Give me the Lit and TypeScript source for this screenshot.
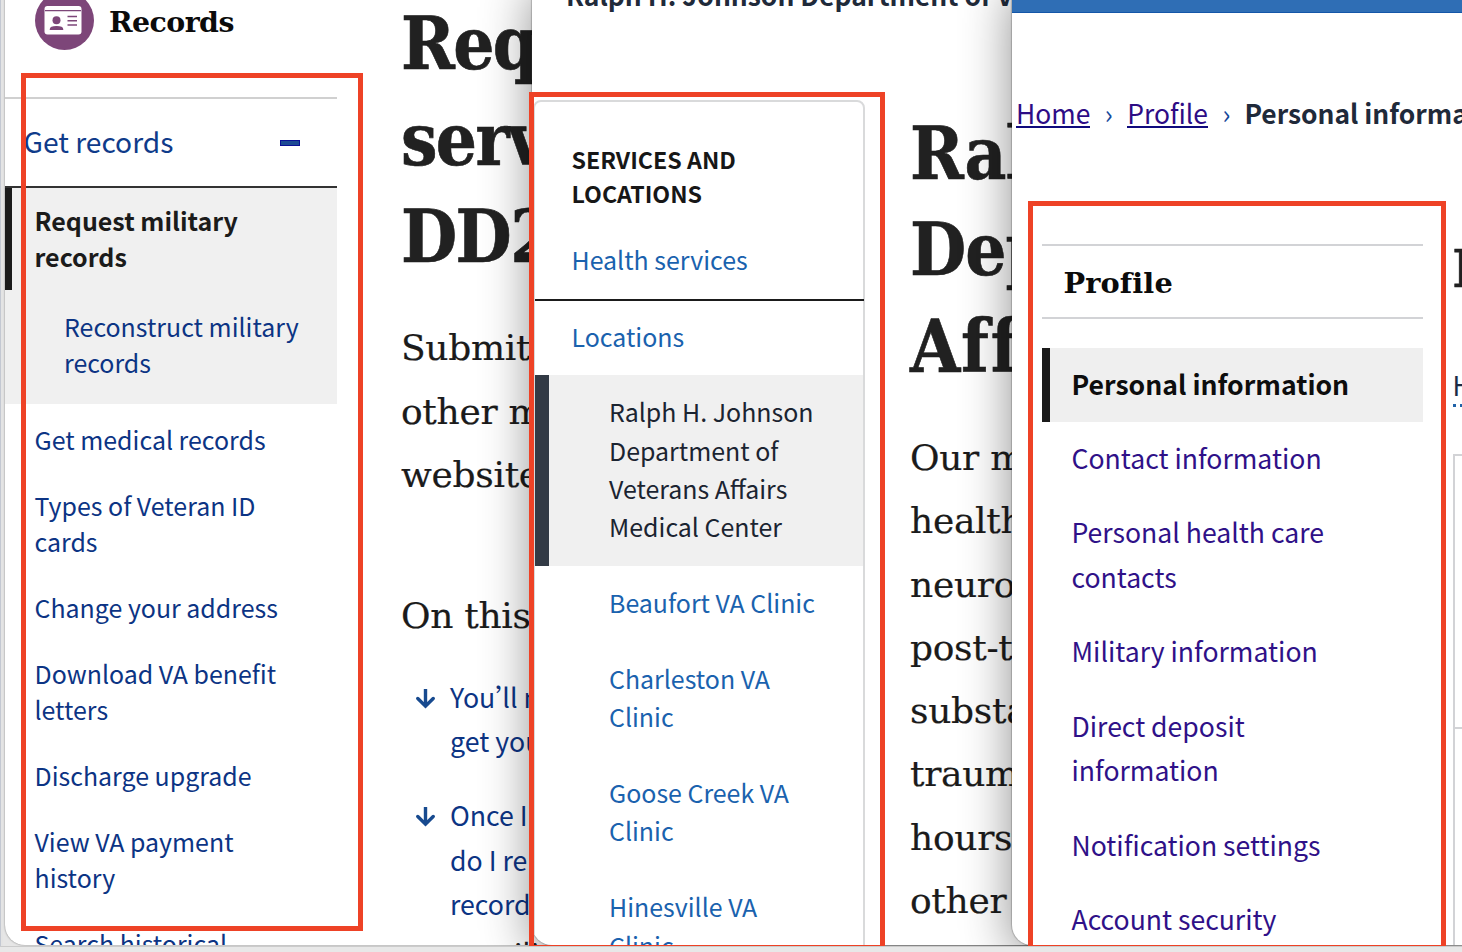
import { LitElement, html, css } from "lit";
import { customElement } from "lit/decorators.js";

const recordLinks = [
  "Get medical records", "Types of Veteran ID cards", "Change your address", "Download VA benefit letters",
  "Discharge upgrade", "View VA payment history", "Search historical military",
];
const clinics = ["Beaufort VA Clinic", "Charleston VA Clinic", "Goose Creek VA Clinic", "Hinesville VA Clinic"];
const profileLinks = [
  "Contact information", "Personal health care contacts", "Military information",
  "Direct deposit information", "Notification settings", "Account security",
];

const arrow = html`<svg class="arrow" viewBox="0 0 20 20" width="20" height="20">
  <path d="M9.5 .5V16M1.8 9.5L9.5 17.2L17.2 9.5" fill="none" stroke="#174a8f" stroke-width="3.4" stroke-linecap="round" />
</svg>`;

@customElement("app-root")
export class AppRoot extends LitElement {
  static styles = css`
    :host {
      display: block; position: relative; width: 1462px; height: 952px; overflow: hidden;
      background: linear-gradient(90deg, #c3c8d2 0 1px, #e4e4e4 1px 3px, #e6e6e6 3px);
      font-family: "Noto Sans CJK SC", "Noto Sans", sans-serif; color: #1b1b1b;
    }
    * { box-sizing: border-box; margin: 0; padding: 0; }
    ul { list-style: none; }
    .slab { font-family: "DejaVu Serif", serif; }
    .strip { position: absolute; left: 0; right: 0; top: 946px; height: 6px; background: #e8e8e8; border-top: 1px solid #cbcbcb; }
    .win { position: absolute; top: -20px; height: 965px; padding-top: 20px; background: #fff; overflow: hidden;
      border-radius: 0 0 0 20px; display: flex; align-items: flex-start; }
    .w1 { left: 5px; width: 700px; box-shadow: 0 0 2px rgba(0,0,0,.5); }
    .w2 { left: 532px; width: 700px; box-shadow: 0 0 1px 1px rgba(0,0,0,.2), 0 10px 50px rgba(0,0,0,.45); }
    .w3 { left: 1012px; width: 470px; display: block; box-shadow: 0 0 1px 1px rgba(0,0,0,.2), 0 10px 50px rgba(0,0,0,.45); }
    .mark { position: absolute; border: 5px solid #ee4226; }
    .m1 { left: 21px; top: 73px; width: 342px; height: 858px; }
    .m2 { left: 529px; top: 92px; width: 356px; height: 854px; border-bottom-width: 1px; }
    .m3 { left: 1028px; top: 201px; width: 418px; height: 745px; border-bottom-width: 1px; }

    .side1 { width: 332px; flex: none; }
    .hub { display: flex; align-items: center; gap: 15px; height: 59px; margin: -9px 0 0 30px; }
    .badge { width: 59px; height: 59px; flex: none; }
    .hub h2 { font-size: 28.4px; line-height: 36px; letter-spacing: -.55px; color: #0b0b0b; padding-top: 2px; }
    .toggle { margin-top: 47px; height: 91px; border-top: 2px solid #d0d0d0; border-bottom: 2px solid #333;
      display: flex; align-items: center; justify-content: space-between; padding: 0 37px 2px 18.5px;
      font-size: 28.2px; line-height: 40px; color: #0f3b8a; }
    .toggle span { margin-top: -1px; }
    .toggle .minus { width: 20px; height: 6px; margin-top: 2px; background: #1d4a94; border: 1px solid #0b1195; }
    .group { background: #f0f0f0; height: 215.5px; }
    .current { border-left: 7px solid #1b1b1b; height: 102px; padding: 13.6px 60px 0 22.5px; font-size: 25px; font-weight: 700; line-height: 36.1px; }
    .child { padding: 18.2px 20px 0 59px; }
    .blue { color: #0c3484; font-size: 24.95px; line-height: 36.1px; }
    .list1 { padding: 17.7px 55px 0 29.5px; display: grid; gap: 29.9px; }

    .main1 { padding-left: 65px; width: 380px; flex: none; }
    h1 { font-family: "DejaVu Serif Condensed", "DejaVu Serif", serif; font-stretch: condensed; font-size: 72px; line-height: 96.4px;
      letter-spacing: -1.6px; color: #212121; white-space: nowrap; -webkit-text-stroke: .6px #212121; }
    .main1 h1 { margin: -4px 0 0 -1px; }
    .intro { font-size: 36px; line-height: 63.25px; letter-spacing: -.3px; white-space: nowrap; -webkit-text-stroke: .2px #1b1b1b; }
    .main1 .intro { margin: 31.2px 0 0 -1px; }
    .main1 .toc { margin-top: 78.2px; }
    .jump { padding: 27px 0 0 14px; display: grid; gap: 29.3px; }
    .jump li { display: flex; gap: 14px; font-size: 26.7px; line-height: 44.6px; color: #0c3484; white-space: nowrap; }
    .arrow { margin-top: 14px; flex: none; }
    .quote { display: inline-block; width: 7px; }
    .below { font-size: 30px; line-height: 30px; padding: 11px 0 0 14px; color: #222; white-space: nowrap; }

    .side2 { width: 352px; flex: none; padding-left: 1px; }
    .crumb { font-size: 26.45px; font-weight: 700; line-height: 40px; color: #1f2a3a; white-space: nowrap; margin-top: -25px; padding-left: 33px; }
    .card { width: 332px; margin-top: 85px; height: 900px; border: 2px solid #d9dadb; border-radius: 8px; }
    .card h3 { padding: 41.2px 60px 0 36.5px; font-size: 23.2px; line-height: 33.4px; color: #171717; height: 138px; }
    .item { color: #1a62ae; font-size: 24.95px; line-height: 38.15px; }
    .health { padding-left: 36.5px; height: 61px; border-bottom: 2px solid #1b1b1b; margin-right: -1px; }
    .locations { padding: 16px 0 0 36.5px; height: 74px; }
    .clinic { padding: 17.6px 40px 20.2px 74px; }
    .clinic.on { background: #f0f0f0; border-left: 14px solid #323a45; padding: 17.4px 20px 20.7px 60px; color: #1b2431; }
    .main2 { padding: 105.8px 0 0 26px; width: 300px; flex: none; }
    .main2 h1 { letter-spacing: -1px; }
    .main2 .wide { letter-spacing: 2px; }
    .main2 .intro { margin-top: 31.2px; }

    .bar { height: 13px; background: #2f6eb5; border-bottom: 1px solid #1456a8; }
    .path { display: flex; margin: 78px 0 0 4px; font-size: 26.4px; line-height: 44px; white-space: nowrap; color: #1f2a3a; }
    .path a { color: #2d0c85; border-bottom: 2px solid #0f0a7d; height: 37px; }
    .path i { font-style: normal; width: 37px; text-align: center; color: #14489a; }
    .path b { margin-left: -.5px; }
    .row3 { display: flex; padding: 108.5px 0 0 29.5px; }
    .side3 { width: 381px; flex: none; border-top: 2px solid #d2d3d6; }
    .side3 h2 { height: 73px; border-bottom: 2px solid #d2d3d6; font-size: 28.8px; line-height: 74px; padding-left: 22px; letter-spacing: .1px; color: #0b0b0b; }
    .side3 ul { padding-top: 29px; }
    .side3 li { padding: 14.2px 60px 15.45px 30px; font-size: 26.6px; line-height: 44.7px; color: #2f1188; }
    .side3 li.on { background: #efefef; border-left: 8px solid #1b1b1b; padding-left: 22px; font-weight: 700; color: #0d0d0d; white-space: nowrap; }
    .main3 { padding-left: 30px; width: 200px; }
    .main3 h1 { font-size: 53px; line-height: 60px; margin-top: -6px; }
    .term { font-size: 26.4px; line-height: 42px; margin-top: 66px; color: #1b2b45; height: 43px; border-bottom: 3px dotted #1f62a8; width: 100px; }
    .panel { margin-top: 47px; border: 2px solid #d2d3d6; height: 600px; }
    .panel div { height: 273px; border-bottom: 2px solid #d2d3d6; }
  `;

  render() {
    return html`
      <div class="win w1">
        <div class="side1">
          <div class="hub">
            <svg class="badge" viewBox="0 0 59 59">
              <circle cx="29.5" cy="29.5" r="29.5" fill="#7d4679" />
              <rect x="9.5" y="15" width="37" height="28.5" rx="3" fill="#fff" />
              <path d="M10 19.7H46" stroke="#7d4679" stroke-width="1.3" />
              <circle cx="21.5" cy="29.3" r="4" fill="#7d4679" />
              <path d="M15.5 38.3C15.5 35 27.5 35 27.5 38.3ZM32.5 25.5H42M32.5 29.7H42M32.5 34H42" fill="#7d4679" stroke="#7d4679" stroke-width="1.5" />
            </svg>
            <h2 class="slab">Records</h2>
          </div>
          <div class="toggle"><span>Get records</span><span class="minus"></span></div>
          <div class="group">
            <div class="current">Request military records</div>
            <div class="child blue">Reconstruct military records</div>
          </div>
          <ul class="list1">${recordLinks.map((t) => html`<li class="blue">${t}</li>`)}</ul>
        </div>
        <div class="main1">
          <h1>Req<br />serv<br />DD2</h1>
          <p class="intro slab">Submit<br />other m<br />website</p>
          <p class="intro toc slab">On this</p>
          <ul class="jump">
            <li>${arrow}<span>You<span class="quote">’</span>ll n<br />get you</span></li>
            <li>${arrow}<span>Once I<br />do I re<br />record</span></li>
          </ul>
          <div class="below">your milita</div>
        </div>
      </div>
      <div class="win w2">
        <div class="side2">
          <div class="crumb">Ralph H. Johnson Department of V</div>
          <div class="card">
            <h3>SERVICES AND LOCATIONS</h3>
            <div class="item health">Health services</div>
            <div class="item locations">Locations</div>
            <div class="item clinic on">Ralph H. Johnson Department of Veterans Affairs Medical Center</div>
            ${clinics.map((t) => html`<div class="item clinic">${t}</div>`)}
          </div>
        </div>
        <div class="main2">
          <h1>Ral<br />Dep<br /><span class="wide">Aff</span></h1>
          <p class="intro slab">Our m<br />health<br />neuro<br />post-t<br />substa<br />traum<br />hours<br />other</p>
        </div>
      </div>
      <div class="win w3">
        <div class="bar"></div>
        <div class="path"><a>Home</a><i>›</i><a>Profile</a><i>›</i><b>Personal informa</b></div>
        <div class="row3">
          <div class="side3">
            <h2 class="slab">Profile</h2>
            <ul><li class="on">Personal information</li>${profileLinks.map((t) => html`<li>${t}</li>`)}</ul>
          </div>
          <div class="main3">
            <h1>P</h1>
            <div class="term">H</div>
            <div class="panel"><div></div></div>
          </div>
        </div>
      </div>
      <div class="strip"></div>
      <div class="mark m1"></div>
      <div class="mark m2"></div>
      <div class="mark m3"></div>
    `;
  }
}
